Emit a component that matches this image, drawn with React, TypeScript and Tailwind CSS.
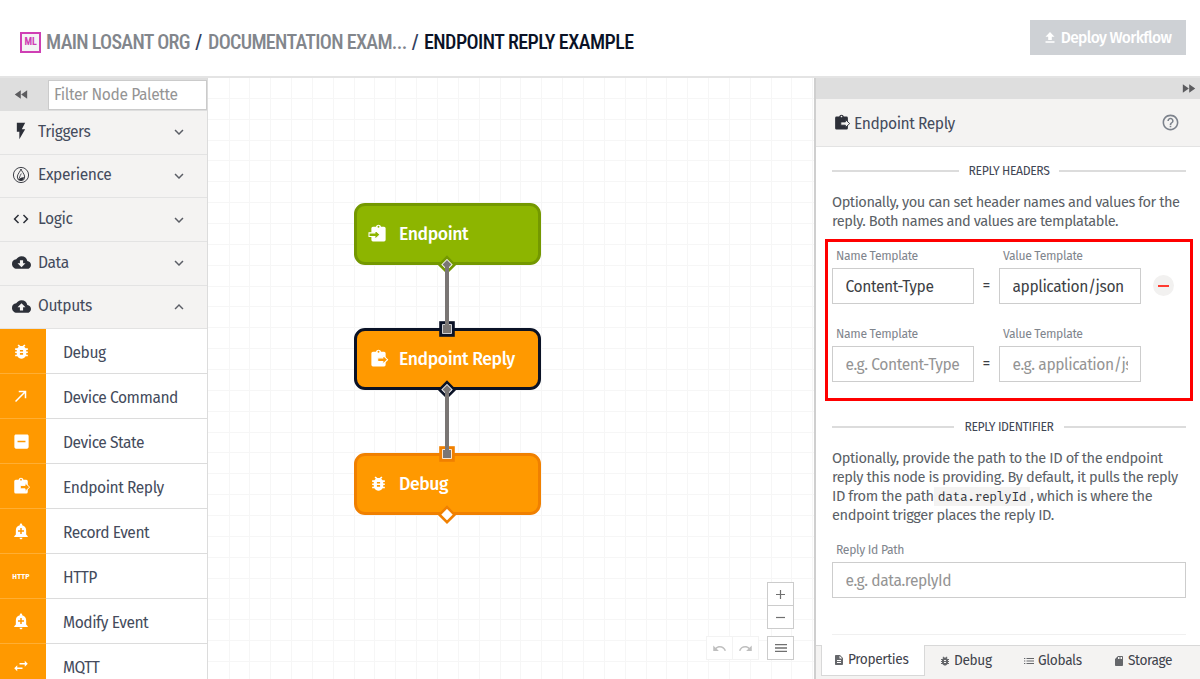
import type { ComponentType, ReactNode } from "react";
import {
  MdAddAlert,
  MdBugReport,
  MdCallMade,
  MdCloudDownload,
  MdCloudUpload,
  MdCode,
  MdDescription,
  MdExpandLess,
  MdExpandMore,
  MdFastForward,
  MdFastRewind,
  MdFlashOn,
  MdHelpOutline,
  MdIndeterminateCheckBox,
  MdMenu,
  MdRedo,
  MdSdCard,
  MdSwapHoriz,
  MdUndo,
} from "react-icons/md";

type IconType = ComponentType<{ className?: string }>;

const board = "M5 3.500h3.700a3.400 3.400 0 0 1 6.600 0H19a2 2 0 0 1 2 2V20a2 2 0 0 1-2 2H5a2 2 0 0 1-2-2V5.500a2 2 0 0 1 2-2zm7-1.200a1.200 1.200 0 1 0 0 2.400 1.200 1.200 0 0 0 0-2.400z";

const ClipboardOut = ({ className, arrow = "fill-[#ff9900]" }: { className?: string; arrow?: string }) => (
  <svg viewBox="0 0 24 24" className={`overflow-visible ${className}`} fill="currentColor">
    <path d={board} fillRule="evenodd" />
    <path d="M17.500 7.800l6 5.700-6 5.700v-3.400h-6.500v-4.600h6.500z" className={arrow} stroke="currentColor" strokeWidth="1.300" />
  </svg>
);

const ClipboardIn: IconType = ({ className }) => (
  <svg viewBox="0 0 24 24" className={`overflow-visible ${className}`} fill="currentColor">
    <path d={board} fillRule="evenodd" />
    <path d="M7.500 7.500l6.500 6-6.500 6v-3.700H0v-4.600h7.500z" className="fill-[#8db500]" stroke="currentColor" strokeWidth="1.300" />
  </svg>
);

const Flame: IconType = ({ className }) => (
  <svg viewBox="0 0 18 18" className={className} fill="none" stroke="currentColor">
    <circle cx="9" cy="9" r="7.600" strokeWidth=".9" />
    <path d="M9 3C8.600 5.200 5.300 8 5.300 11a3.700 3.700 0 0 0 7.400 0C12.700 8 9.400 5.200 9 3z" strokeWidth=".9" />
    <path d="M9.300 7.500C8.800 9 7.500 10.300 7.300 12" strokeWidth=".8" />
    <path d="M6 12.600c1.800.8 3-1.800 6-1.300-.1 2.200-1.700 3.300-3 3.300-1.300-.1-2.500-.8-3-2z" fill="currentColor" stroke="none" />
  </svg>
);

const Upload: IconType = ({ className }) => (
  <svg viewBox="0 0 10 11" className={className} fill="currentColor">
    <path d="M5 0l4.500 4.700H6.800V8H3.200V4.700H.5zM.5 9.200h9v1.600h-9z" />
  </svg>
);

const ListLines: IconType = ({ className }) => (
  <svg viewBox="0 0 12 12" className={className} fill="currentColor">
    <path d="M1 3h1.300v1H1zM1 5.500h1.300v1H1zM1 8h1.300v1H1zM3.500 3H11v1H3.500zM3.500 5.500H11v1H3.500zM3.500 8H11v1H3.500z" />
  </svg>
);

const categories: { label: string; icon: IconType; size: string; open?: boolean }[] = [
  { label: "Triggers", icon: MdFlashOn, size: "size-[20px]" },
  { label: "Experience", icon: Flame, size: "size-[18px]" },
  { label: "Logic", icon: MdCode, size: "size-[18px]" },
  { label: "Data", icon: MdCloudDownload, size: "size-[19px]" },
  { label: "Outputs", icon: MdCloudUpload, size: "size-[19px]", open: true },
];

const outputs: { label: string; icon?: IconType; size?: string }[] = [
  { label: "Debug", icon: MdBugReport, size: "size-[19px]" },
  { label: "Device Command", icon: MdCallMade, size: "size-[18px]" },
  { label: "Device State", icon: MdIndeterminateCheckBox, size: "size-[19px]" },
  { label: "Endpoint Reply", icon: ClipboardOut, size: "size-[18px]" },
  { label: "Record Event", icon: MdAddAlert, size: "size-[18px]" },
  { label: "HTTP" },
  { label: "Modify Event", icon: MdAddAlert, size: "size-[18px]" },
  { label: "MQTT", icon: MdSwapHoriz, size: "size-[18px]" },
];

function Header() {
  return (
    <header className="flex h-[78px] shrink-0 items-start justify-between border-b-2 border-[#e4e4e4] pl-5 pr-[14px] pt-5">
      <div className="flex items-center pt-[7px] font-['Roboto_Condensed','Roboto',sans-serif] text-[20px] font-medium leading-[30px] tracking-[-0.68px] text-[#82868c]">
        <span className="flex size-[21px] items-center justify-center border-2 border-[#cf3fb4] bg-[#f4f4f4] text-[10px] font-bold leading-none tracking-[-0.3px] text-[#cf3fb4]">
          ML
        </span>
        <span className="ml-[5px] w-[143px] whitespace-nowrap">MAIN LOSANT ORG</span>
        <span className="w-[19px] text-center text-[#33415e]">/</span>
        <span className="w-[198px] whitespace-nowrap">DOCUMENTATION EXAM...</span>
        <span className="w-[18px] text-center text-[#33415e]">/</span>
        <span className="whitespace-nowrap tracking-[-0.55px] text-[#0a1226]">ENDPOINT REPLY EXAMPLE</span>
      </div>
      <button className="flex h-[35px] w-[156px] items-center justify-center gap-[6px] bg-[#ced1d5] text-[15.6px] font-medium tracking-[-0.65px] text-white">
        <Upload className="h-[11px] w-[10px]" />
        Deploy Workflow
      </button>
    </header>
  );
}

function Palette() {
  return (
    <aside className="flex w-[208px] shrink-0 flex-col overflow-hidden border-r border-[#dcdcdc] bg-white text-[#444b5c]">
      <div className="flex h-[33px] shrink-0 items-center bg-[#dedede]">
        <div className="flex w-12 justify-center pr-[6px]">
          <MdFastRewind className="size-[17px] text-[#5c5c5f]" />
        </div>
        <div className="flex h-[30px] flex-1 items-center border-[1.5px] border-[#cbcbcb] bg-white pl-[5px] pt-px text-[15.6px] tracking-[-0.38px] text-[#949494]">
          Filter Node Palette
        </div>
      </div>
      {categories.map(({ label, icon: Icon, size, open }) => {
        const Chevron = open ? MdExpandLess : MdExpandMore;
        return (
          <div key={label} className="flex h-[43.7px] shrink-0 items-center border-b-[1.5px] border-[#e3e3e3] bg-[#f4f3f2] pb-[2px]">
            <span className="flex w-[42px] justify-center text-[#2c2f38]">
              <Icon className={size} />
            </span>
            <span className="-ml-1 flex-1 text-[15.6px] tracking-[-0.4px]">{label}</span>
            <Chevron className="mr-[19px] mt-[2px] size-[18px] text-[#5b5e66]" />
          </div>
        );
      })}
      {outputs.map(({ label, icon: Icon, size }) => (
        <div key={label} className="flex h-[44.95px] shrink-0">
          <div className="flex w-[46px] items-center justify-center border-b border-[#ffae33] bg-[#ff9900] pr-1 text-white">
            {Icon ? <Icon className={size} /> : <span className="pt-[2px] text-[7px] font-bold tracking-[0.3px]">HTTP</span>}
          </div>
          <div className="flex flex-1 items-center border-b border-[#dcdcdc] pl-[17px] pt-[3px] text-[15.6px] tracking-[-0.47px]">{label}</div>
        </div>
      ))}
    </aside>
  );
}

function Grid() {
  const cols = Array.from({ length: 29 }, (_, i) => Math.floor(21 + i * 20.85));
  const rows = Array.from({ length: 28 }, (_, i) => Math.floor(20.3 + i * 20.86));
  return (
    <svg className="absolute inset-0 h-full w-full" shapeRendering="crispEdges" fill="#f6f6f6">
      {cols.map((x) => (
        <rect key={`c${x}`} x={x} y="0" width="1" height="601" />
      ))}
      {rows.map((y) => (
        <rect key={`r${y}`} x="0" y={y} width="606" height="1" />
      ))}
    </svg>
  );
}

function FlowNode({ label, icon: Icon, className }: { label: string; icon: IconType; className: string }) {
  return (
    <div className={`absolute left-[146px] flex h-[62px] w-[187px] items-center rounded-[11px] border-[3px] pl-[12px] text-[17.6px] font-medium tracking-[-0.4px] text-white ${className}`}>
      <Icon className="mb-px mr-[11px] size-[19px]" />
      <span className="pt-[3px]">{label}</span>
    </div>
  );
}

function Canvas() {
  return (
    <main className="relative flex-1 overflow-hidden bg-white">
      <Grid />
      <FlowNode label="Endpoint" icon={ClipboardIn} className="top-[125px] border-[#749800] bg-[#8db500]" />
      <FlowNode label="Endpoint Reply" icon={ClipboardOut} className="top-[250px] border-[#0a1226] bg-[#ff9900]" />
      <FlowNode label="Debug" icon={MdBugReport} className="top-[375px] border-[#f08000] bg-[#ff9900]" />
      <svg className="absolute inset-0 h-full w-full" fill="#fff">
        <path d="M239 179.200l7.500 7.500-7.500 7.500-7.500-7.500z" stroke="#749800" strokeWidth="2.600" />
        <path d="M239 304.200l7.500 7.500-7.500 7.500-7.500-7.500z" stroke="#0a1226" strokeWidth="2.600" />
        <path d="M239 429.200l7.500 7.500-7.500 7.500-7.500-7.500z" stroke="#f08000" strokeWidth="2.600" />
        <rect x="232.700" y="244.700" width="12.600" height="12.600" stroke="#0a1226" strokeWidth="3" />
        <rect x="232.700" y="369.700" width="12.600" height="12.600" stroke="#f08000" strokeWidth="3" />
        <g fill="#7a7674">
          <path d="M239 182l4.500 4.500-2.500 2.500v58h2v8h-8v-8h2v-58l-2.500-2.500z" />
          <path d="M239 307l4.500 4.500-2.500 2.500v58h2v8h-8v-8h2v-58l-2.500-2.500z" />
        </g>
      </svg>
      <div className="absolute bottom-[19px] left-[498px] flex items-end gap-2">
        <div className="flex h-[24px] w-[53px] border border-[#f3f3f3] bg-white text-[#bfbfbf]">
          <span className="flex flex-1 items-center justify-center border-r border-[#f3f3f3]">
            <MdUndo className="size-[15px]" />
          </span>
          <span className="flex flex-1 items-center justify-center">
            <MdRedo className="size-[15px]" />
          </span>
        </div>
        <div className="flex w-[27px] flex-col gap-[7px] text-[#707070]">
          <div className="flex h-[47px] flex-col border border-[#cccccc] bg-white">
            <span className="flex flex-1 items-center justify-center border-b border-[#cccccc]">
              <svg className="size-[9px]" viewBox="0 0 9 9" stroke="currentColor" strokeWidth="1.200"><path d="M0 4.500h9M4.500 0v9" /></svg>
            </span>
            <span className="flex flex-1 items-center justify-center">
              <svg className="size-[9px]" viewBox="0 0 9 9" stroke="currentColor" strokeWidth="1.200"><path d="M0 4.500h9" /></svg>
            </span>
          </div>
          <div className="flex h-[24px] items-center justify-center border border-[#cccccc] bg-white">
            <MdMenu className="size-[16px]" />
          </div>
        </div>
      </div>
    </main>
  );
}

function SectionTitle({ children }: { children: ReactNode }) {
  return (
    <div className="flex h-4 items-center gap-[10px] text-[12.2px] tracking-[-0.4px] text-[#3f4654]">
      <span className="h-[1.5px] flex-1 bg-[#dcdcdc]" />
      {children}
      <span className="h-[1.5px] flex-1 bg-[#dcdcdc]" />
    </div>
  );
}

function Field({ label, text, filled, className }: { label: string; text: string; filled?: boolean; className: string }) {
  return (
    <div className={className}>
      <div className="h-[21px] pl-1 pt-px text-[12.2px] leading-4 tracking-[-0.33px] text-[#7f858d]">{label}</div>
      <div className={`flex h-9 items-center border-[1.5px] border-[#cdcdcd] bg-white px-[12.5px] pt-px text-[15.6px] tracking-[-0.42px] ${filled ? "text-[#3d3f45]" : "text-[#949494]"}`}>
        <span className="w-full overflow-hidden whitespace-nowrap">{text}</span>
      </div>
    </div>
  );
}

function HeaderRow({ name, value, filled }: { name: string; value: string; filled?: boolean }) {
  return (
    <div className="flex items-end">
      <Field label="Name Template" text={name} filled={filled} className="w-[142px]" />
      <span className="w-[25px] pb-[7px] text-center text-[15.6px] text-[#3d3f45]">=</span>
      <Field label="Value Template" text={value} filled={filled} className="w-[142px]" />
      {filled && (
        <span className="mb-2 ml-[12px] flex size-[21px] items-center justify-center rounded-full bg-[#f2f1f0]">
          <span className="h-[2px] w-[11px] bg-[#ff3b30]" />
        </span>
      )}
    </div>
  );
}

function Tab({ label, icon: Icon, className }: { label: string; icon: IconType; className: string }) {
  return (
    <span className={`flex items-center text-[13.7px] tracking-[-0.36px] text-[#3f434c] ${className}`}>
      <Icon className="mr-[3px] size-[12px] text-[#65676b]" />
      {label}
    </span>
  );
}

function Inspector() {
  return (
    <aside className="flex w-[386px] shrink-0 flex-col overflow-hidden border-l-2 border-[#cfcfcf] bg-white">
      <div className="flex h-[21px] shrink-0 items-center justify-end bg-[#dedede] pr-[3px]">
        <MdFastForward className="size-[17px] text-[#5c5c5f]" />
      </div>
      <div className="flex h-12 shrink-0 items-center border-b border-[#e3e3e3] bg-[#f4f3f2] pl-[17px] pr-5 text-[15.6px] tracking-[-0.47px] text-[#444b5c]">
        <ClipboardOut className="mr-[4px] size-[17px] text-[#2c2f38]" arrow="fill-[#f4f3f2]" />
        <span className="flex-1 pt-[3px]">Endpoint Reply</span>
        <MdHelpOutline className="mb-px size-[19px] text-[#7c828c]" />
      </div>
      <div className="flex flex-1 flex-col pl-4 pr-[14px] pt-4">
        <SectionTitle>REPLY HEADERS</SectionTitle>
        <p className="mt-[14px] whitespace-nowrap text-[14.6px] leading-[19px] tracking-[-0.45px] text-[#5b5f66]">
          Optionally, you can set header names and values for the
          <br />
          reply. Both names and values are templatable.
        </p>
        <div className="-ml-[7px] -mr-[7px] mt-[8px] flex h-[162px] flex-col gap-[21px] border-[3px] border-[#ff0000] pl-1 pt-[5px]">
          <HeaderRow name="Content-Type" value="application/json" filled />
          <HeaderRow name="e.g. Content-Type" value="e.g. application/json" />
        </div>
        <div className="mt-[18px]">
          <SectionTitle>REPLY IDENTIFIER</SectionTitle>
        </div>
        <p className="mt-[14px] whitespace-nowrap text-[14.6px] leading-[19px] tracking-[-0.42px] text-[#5b5f66]">
          Optionally, provide the path to the ID of the endpoint
          <br />
          reply this node is providing. By default, it pulls the reply
          <br />
          ID from the path
          <code className="bg-[#f4f3f2] px-1 py-[2px] font-['Fira_Mono','DejaVu_Sans_Mono',monospace] text-[13px] leading-none tracking-[-0.43px] text-[#33363d]">data.replyId</code>, which is where the
          <br />
          endpoint trigger places the reply ID.
        </p>
        <Field label="Reply Id Path" text="e.g. data.replyId" className="mt-4" />
        <div className="mt-[36px] border-t border-[#f0f0f0]" />
      </div>
      <div className="flex h-[34px] shrink-0 bg-[#f4f3f2]">
        <div className="w-[5px] border-t border-[#d8d8d8]" />
        <div className="flex h-[31px] w-[104px] border-x border-b border-[#d8d8d8] bg-white">
          <Tab label="Properties" icon={MdDescription} className="pl-[11px]" />
        </div>
        <div className="flex flex-1 border-t border-[#d8d8d8] pb-[3px]">
          <Tab label="Debug" icon={MdBugReport} className="w-[84px] pl-[14px]" />
          <Tab label="Globals" icon={ListLines} className="w-[90px] pl-[14px]" />
          <Tab label="Storage" icon={MdSdCard} className="pl-[14px]" />
        </div>
      </div>
    </aside>
  );
}

export default function App() {
  return (
    <div className="flex h-[679px] w-[1200px] flex-col overflow-hidden bg-white font-['Fira_Sans','Noto_Sans',sans-serif]">
      <Header />
      <div className="flex min-h-0 flex-1">
        <Palette />
        <Canvas />
        <Inspector />
      </div>
    </div>
  );
}
